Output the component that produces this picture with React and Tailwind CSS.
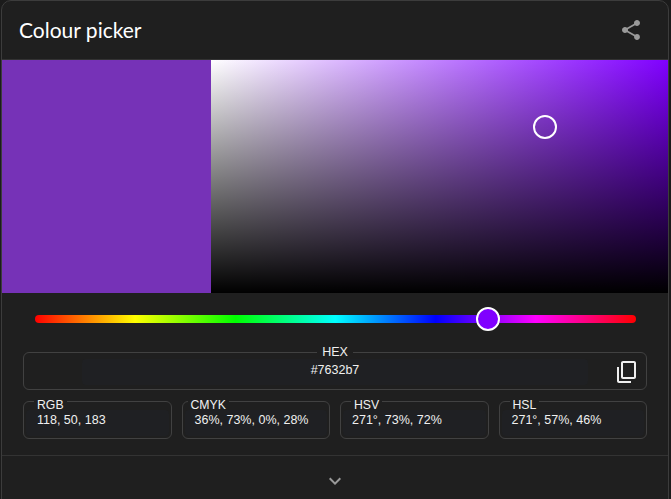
import React from "react";

const formats = [
  { label: "RGB", value: "118, 50, 183", legend: "ml-[10px]", text: "pl-[11px]" },
  { label: "CMYK", value: "36%, 73%, 0%, 28%", legend: "ml-[5px]", text: "pl-[10px]" },
  { label: "HSV", value: "271°, 73%, 72%", legend: "ml-[10px]", text: "pl-[9px]" },
  { label: "HSL", value: "271°, 57%, 46%", legend: "ml-[10px]", text: "pl-[10px]" },
];

function ValueBox({ item }) {
  return (
    <fieldset className="h-[45px] min-w-0 rounded-[6px] border border-[#414141] -mt-[7px]">
      <legend className={`${item.legend} translate-y-[4px] px-[3px] text-[12.25px] leading-[14px] text-[#f0f0f0]`}>{item.label}</legend>
      <div className={`mx-[2px] mt-[2px] h-[26px] rounded-[4px] bg-[#1f2023] ${item.text} pt-[3px] text-[12.5px] leading-[15px] text-[#f0f0f0] whitespace-nowrap`}>
        {item.value}
      </div>
    </fieldset>
  );
}

export default function App() {
  return (
    <div className="h-[499px] w-[671px] overflow-hidden bg-[#1b1b1b] pl-px font-['Liberation_Sans',sans-serif]">
      <div className="flex h-[510px] w-[668px] flex-col rounded-t-[10px] border border-[#3c3c3c] bg-[#1f1f1f]">
        {/* Header */}
        <div className="flex h-[59px] shrink-0 items-center justify-between border-b border-[#333] pl-[17px] pr-[25px]">
          <span className="font-['Lato',sans-serif] text-[21px] leading-6 text-white">Colour picker</span>
          <svg className="h-6 w-6 fill-[#9a9a9a]" viewBox="0 0 24 24">
            <path d="M18 16.08c-.76 0-1.44.3-1.96.77L8.91 12.7c.05-.23.09-.46.09-.7s-.04-.47-.09-.7l7.05-4.11c.54.5 1.25.81 2.04.81 1.66 0 3-1.34 3-3s-1.34-3-3-3-3 1.34-3 3c0 .24.04.47.09.7L8.04 9.81C7.5 9.31 6.79 9 6 9c-1.66 0-3 1.34-3 3s1.34 3 3 3c.79 0 1.5-.31 2.04-.81l7.12 4.16c-.05.21-.08.43-.08.65 0 1.61 1.31 2.92 2.92 2.92 1.61 0 2.92-1.31 2.92-2.92s-1.31-2.92-2.92-2.92z" />
          </svg>
        </div>

        {/* Swatch and saturation area */}
        <div className="flex h-[233px] shrink-0">
          <div className="w-[209px] bg-[#7632b7]" />
          <div className="relative flex-1 bg-[linear-gradient(to_right,#ffffff,#8000ff)]">
            <div className="h-full bg-[linear-gradient(to_bottom,rgba(0,0,0,0),#000000)]" />
            <div className="absolute left-[322px] top-[55px] h-6 w-6 rounded-full border-2 border-white" />
          </div>
        </div>

        {/* Hue slider */}
        <div className="relative ml-[33px] mr-[32px] mt-[22px] h-2 shrink-0 rounded-full bg-[linear-gradient(to_right,#ff0000,#ffff00,#00ff00,#00ffff,#0000ff,#ff00ff,#ff0000)]">
          <div className="absolute left-[441px] top-[-8px] h-6 w-6 rounded-full border-2 border-white bg-[#8000ff]" />
        </div>

        {/* Values */}
        <div className="mx-[21px] mt-[29px] flex shrink-0 flex-col gap-[11px]">
          <fieldset className="relative h-[45px] rounded-[6px] border border-[#414141] -mt-[7px]">
            <legend className="mx-auto px-[5px] text-center text-[12.5px] leading-[14px] text-[#f0f0f0]">HEX</legend>
            <div className="mx-[58px] h-[26px] rounded-[4px] bg-[#1f2023] pt-[4px] text-center text-[12.5px] leading-[15px] text-[#f0f0f0]">#7632b7</div>
            <svg className="absolute right-[7px] top-[1px] h-6 w-6 fill-[#efefef]" viewBox="0 0 24 24">
              <g transform="translate(0 24) scale(1 -1)">
                <path d="M16 1H4c-1.1 0-2 .9-2 2v14h2V3h12V1zm3 4H8c-1.1 0-2 .9-2 2v14c0 1.1.9 2 2 2h11c1.1 0 2-.9 2-2V7c0-1.1-.9-2-2-2zm0 16H8V7h11v14z" />
              </g>
            </svg>
          </fieldset>
          <div className="grid grid-cols-4 gap-[10px]">
            {formats.map((item) => (
              <ValueBox key={item.label} item={item} />
            ))}
          </div>
        </div>

        {/* Expand */}
        <div className="mt-[16px] flex shrink-0 justify-center border-t border-[#333] pt-[13px]">
          <svg className="h-6 w-6 fill-[#9a9a9a]" viewBox="0 0 24 24">
            <path d="M16.59 8.59L12 13.17 7.41 8.59 6 10l6 6 6-6z" />
          </svg>
        </div>
      </div>
    </div>
  );
}
